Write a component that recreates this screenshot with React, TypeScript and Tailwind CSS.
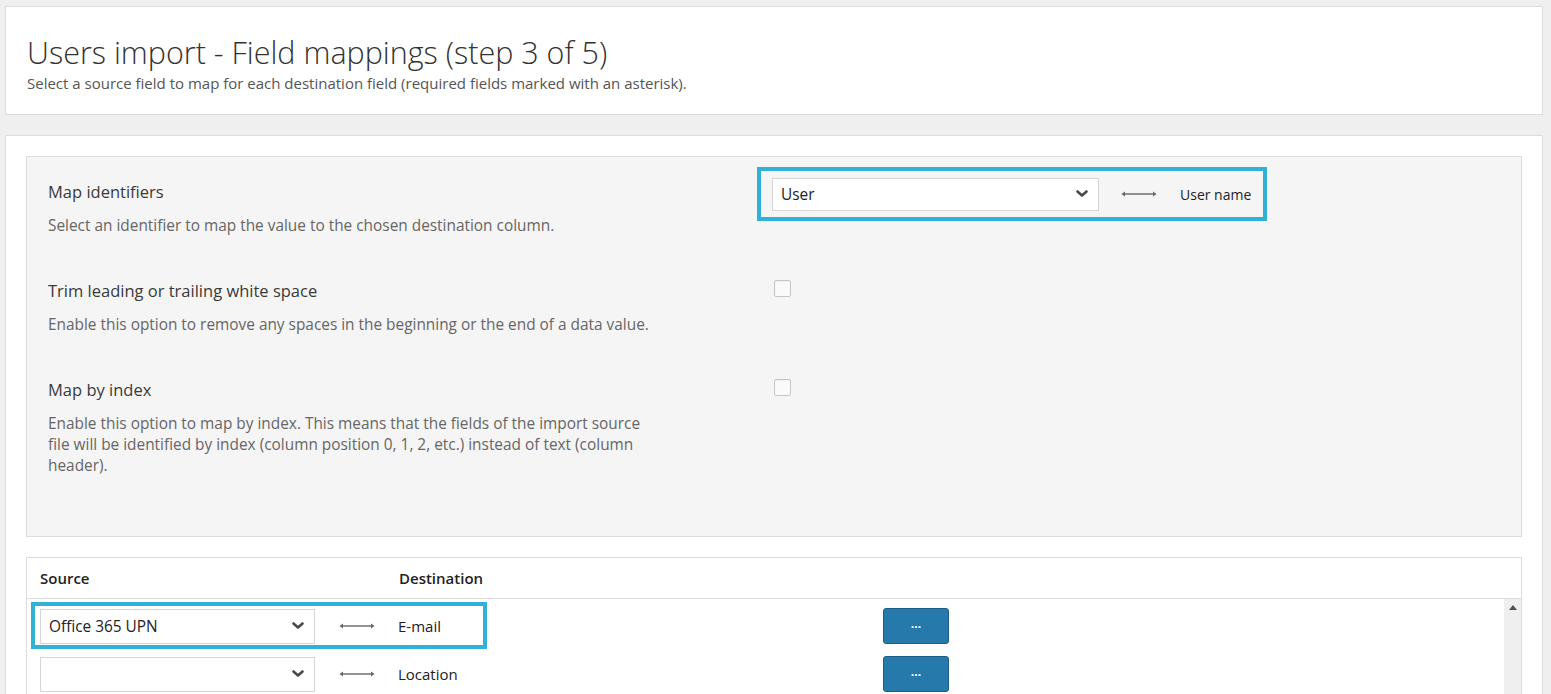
import React from "react";

const font = { fontFamily: '"Open Sans", "Noto Sans", sans-serif' };

function Chevron() {
  return (
    <svg width="12" height="8" viewBox="0 0 12 8" className="shrink-0">
      <path d="M1.5 1.5 L6 5.5 L10.5 1.5" fill="none" stroke="#4a4a4a" strokeWidth="2.6" strokeLinecap="round" strokeLinejoin="round" />
    </svg>
  );
}

function Arrows() {
  return (
    <svg width="36" height="8" viewBox="0 0 36 8" className="shrink-0">
      <line x1="3" y1="4" x2="33" y2="4" stroke="#666" strokeWidth="1.4" />
      <path d="M0.5 4 L4 1.6 L4 6.4 Z" fill="#666" />
      <path d="M35.5 4 L32 1.6 L32 6.4 Z" fill="#666" />
    </svg>
  );
}

function Select({ value, width, height }: { value: string; width: string; height: string }) {
  return (
    <div className={`flex items-center justify-between border border-[#d6d6d6] bg-white pl-[8px] pr-[10px] ${width} ${height}`}>
      <span className="pt-[1px] text-[15.4px] text-[#222]">{value}</span>
      <Chevron />
    </div>
  );
}

function Checkbox() {
  return <div className="w-[17px] h-[17px] rounded-[2px] border border-[#c6c6c6] bg-[#fafafa] shadow-[inset_0_1px_1px_rgba(0,0,0,0.04)]" />;
}

function Option({ title, children, right }: { title: string; children: React.ReactNode; right: React.ReactNode }) {
  return (
    <div className="flex">
      <div className="w-[724px] shrink-0">
        <div className="text-[16.5px] leading-[22px] text-[#3a3a3a]">{title}</div>
        <div className="mt-[12px] w-[612px] text-[15.4px] leading-[21px] text-[#666]">{children}</div>
      </div>
      <div>{right}</div>
    </div>
  );
}

const rows = [
  { source: "Office 365 UPN", dest: "E-mail", marked: true },
  { source: "", dest: "Location", marked: false },
];

export default function App() {
  return (
    <div style={font} className="h-[694px] overflow-hidden bg-[#efefef] pl-[5px] pr-[8px] pt-[6px]">
      {/* page header */}
      <div className="h-[109px] border border-[#dcdcdc] bg-white px-[21px] pt-[27px]">
        <h1 className="text-[30.5px] font-light leading-[36px] text-[#333]">Users import - Field mappings (step 3 of 5)</h1>
        <p className="mt-[3px] text-[15px] leading-[20px] text-[#555]">
          Select a source field to map for each destination field (required fields marked with an asterisk).
        </p>
      </div>

      <div className="mt-[20px] h-[600px] border border-[#dcdcdc] bg-white p-[20px]">
        {/* options panel */}
        <div className="flex h-[381px] flex-col border border-[#dcdcdc] bg-[#f5f5f5] pl-[21px] pt-[24px]">
          <Option
            title="Map identifiers"
            right={
              <div className="-ml-[15px] -mt-[14px] flex h-[54px] w-[510px] items-center border-4 border-[#30b1d6] pl-[11px]">
                <Select value="User" width="w-[327px]" height="h-[33px]" />
                <div className="ml-[22px]">
                  <Arrows />
                </div>
                <span className="ml-[23px] text-[14px] text-[#222]">User name</span>
              </div>
            }
          >
            Select an identifier to map the value to the chosen destination column.
          </Option>

          <div className="mt-[44px]">
            <Option title="Trim leading or trailing white space" right={<div className="ml-[2px]"><Checkbox /></div>}>
              Enable this option to remove any spaces in the beginning or the end of a data value.
            </Option>
          </div>

          <div className="mt-[44px]">
            <Option title="Map by index" right={<div className="ml-[2px]"><Checkbox /></div>}>
              Enable this option to map by index. This means that the fields of the import source file will be identified by
              index (column position 0, 1, 2, etc.) instead of text (column header).
            </Option>
          </div>
        </div>

        {/* mappings table */}
        <div className="mt-[20px] border border-[#dcdcdc] bg-white">
          <div className="flex h-[41px] items-center border-b border-[#dcdcdc] pl-[13px] text-[15px] font-semibold text-[#222]">
            <span className="w-[359px]">Source</span>
            <span>Destination</span>
          </div>
          <div className="flex h-[200px]">
            <div className="flex flex-1 flex-col gap-[12px] pl-[13px] pt-[9px]">
              {rows.map((r) => (
                <div key={r.dest} className="relative flex h-[36px] items-center">
                  <Select value={r.source} width="w-[275px]" height="h-[35px]" />
                  <div className="ml-[24px]">
                    <Arrows />
                  </div>
                  <span className="ml-[23px] w-[485px] pt-[1px] text-[15px] text-[#222]">{r.dest}</span>
                  <button className="flex h-[36px] w-[66px] items-center justify-center rounded-[3px] border border-[#1c5d88] bg-[#2579ab] pb-[4px] text-[12px] font-bold text-white">
                    ...
                  </button>
                  {r.marked && (
                    <div className="pointer-events-none absolute left-[-9px] top-[-6px] h-[47px] w-[456px] border-4 border-[#30b1d6]" />
                  )}
                </div>
              ))}
            </div>
            {/* scrollbar */}
            <div className="flex w-[17px] justify-center bg-[#efefef] pt-[6px]">
              <svg width="8" height="5" viewBox="0 0 8 5">
                <path d="M0 5 L4 0 L8 5 Z" fill="#505050" />
              </svg>
            </div>
          </div>
        </div>
      </div>
    </div>
  );
}
